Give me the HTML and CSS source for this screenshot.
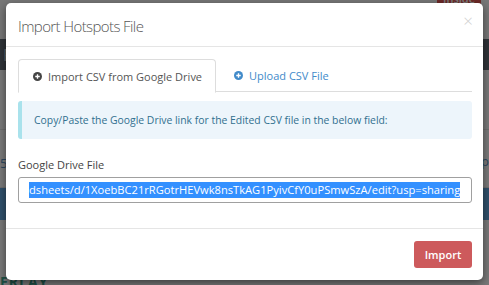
FILE: index.html
```html
<!DOCTYPE html>
<html>
<head>
<meta charset="utf-8">
<link rel="stylesheet" href="styles.css">
</head>
<body>
<div class="page">
  <div class="band top"><span class="badge">Inside</span></div>
  <div class="band navbar"><span class="nav-letter">F</span></div>
  <div class="band light"></div>
  <div class="band row"><span class="num">5</span><span class="rtext">p</span></div>
  <div class="band blue"></div>
  <div class="band light2"></div>
  <div class="band foot"><span class="overlay-title">ERLAY</span></div>
</div>
<div class="backdrop"></div>
<div class="modal">
  <div class="modal-header">
    <h4 class="modal-title">Import Hotspots File</h4>
    <span class="close">&times;</span>
  </div>
  <div class="modal-body">
    <ul class="tabs">
      <li class="tab active">
        <svg class="ico" viewBox="0 0 16 16"><circle cx="8" cy="8" r="8" fill="currentColor"/><path d="M8 4v8M4 8h8" stroke="#fff" stroke-width="2.4"/></svg>
        Import CSV from Google Drive
      </li>
      <li class="tab link">
        <svg class="ico" viewBox="0 0 16 16"><circle cx="8" cy="8" r="8" fill="currentColor"/><path d="M8 4v8M4 8h8" stroke="#fff" stroke-width="2.4"/></svg>
        Upload CSV File
      </li>
    </ul>
    <div class="alert">Copy/Paste the Google Drive link for the Edited CSV file in the below field:</div>
    <div class="form-group">
      <label class="label">Google Drive File</label>
      <div class="input"><span class="sel">dsheets/d/1XoebBC21rRGotrHEVwk8nsTkAG1PyivCfY0uPSmwSzA/edit?usp=sharing</span></div>
    </div>
  </div>
  <div class="modal-footer">
    <button class="btn">Import</button>
  </div>
</div>
</body>
</html>
```
FILE: styles.css
```css
* { box-sizing: border-box; }
html, body { margin: 0; padding: 0; }
body {
  width: 489px;
  height: 285px;
  overflow: hidden;
  font-family: "Open Sans", "DejaVu Sans", sans-serif;
  position: relative;
  background: #f0f0f0;
}
.page { display: flex; flex-direction: column; height: 285px; overflow: hidden; }
.band { position: relative; width: 100%; flex: none; overflow: hidden; }
.top { height: 39px; background: #eeeeee; }
.badge {
  position: absolute; right: 8px; top: -11px;
  background: #d9534f; color: #fff; font-size: 11px;
  padding: 2px 6px; border-radius: 4px; font-weight: 600;
}
.navbar { height: 31px; background: #5e6670; color: #cfd4da; font-size: 16px; }
.nav-letter { position: absolute; left: 3px; top: 5px; }
.light { height: 60px; background: #f2f2f2; border-bottom: 1px solid #dddddd; }
.row { height: 58px; background: #f5f5f5; border-bottom: 1px solid #dddddd; }
.num { position: absolute; left: 0; top: 24px; color: #5a8fc0; font-size: 13px; }
.rtext { position: absolute; right: 0; top: 22px; color: #5a8fc0; font-size: 13px; }
.blue { height: 32px; background: #5fa0d6; }
.light2 { height: 48px; background: #f2f2f2; }
.foot { height: 17px; background: #f2f2f2; }
.overlay-title {
  position: absolute; left: 0; top: 4px; font-size: 14px;
  font-weight: 700; color: #3aa08a; letter-spacing: 1px;
}
.backdrop {
  position: absolute; inset: 0;
  background: rgba(0, 0, 0, 0.5);
}
.modal {
  position: absolute;
  left: 6px; top: 3px;
  width: 477px; height: 277px;
  background: #fff;
  border-radius: 5px;
  box-shadow: 0 3px 9px rgba(0, 0, 0, 0.5);
  display: flex; flex-direction: column;
}
.modal-header {
  height: 44px;
  padding: 0 12px;
  border-bottom: 1px solid #e5e5e5;
  display: flex; align-items: center; justify-content: space-between;
  position: relative;
  flex: none;
}
.modal-title {
  margin: 0;
  padding-top: 2px;
  font-size: 15px;
  font-weight: 300;
  letter-spacing: -0.6px;
  color: #555;
}
.close {
  position: absolute; right: 10px; top: 6px;
  font-size: 17px; color: #d0d0d0; font-weight: 300;
}
.modal-body {
  padding: 12px 11px 0 12px;
  flex: 1;
}
.tabs {
  list-style: none;
  margin: 0;
  padding: 0;
  display: flex;
  border-bottom: 1px solid #dddddd;
  height: 33px;
}
.tab {
  display: flex; align-items: center; gap: 6px;
  padding: 0 13px 0 16px;
  font-size: 11px;
  height: 33px;
  margin-right: 2px;
}
.tab.active {
  color: #555;
  border: 1px solid #dddddd;
  border-bottom-color: #fff;
  border-radius: 4px 4px 0 0;
  background: #fff;
  height: 34px;
  padding-left: 14px;
}
.tab.link { color: #428bca; }
.tab.active .ico { color: #444; }
.ico { width: 9px; height: 9px; flex: none; }
.alert {
  margin-top: 9px;
  height: 38px;
  background: #edf5fb;
  border-left: 4px solid #a9e2ec;
  border-radius: 3px;
  color: #31708f;
  font-size: 10.4px;
  display: flex; align-items: center;
  padding-left: 12px;
}
.form-group { margin-top: 18px; }
.label {
  display: block;
  font-size: 11px;
  line-height: 15px;
  color: #444;
  margin-bottom: 5px;
}
.input {
  height: 26px;
  border: 1px solid #a0a0a0;
  border-radius: 3px;
  display: flex; align-items: center;
  padding: 0 10px;
  overflow: hidden;
  white-space: nowrap;
  font-size: 11.15px;
}
.sel { background: #3390ff; color: #fff; line-height: 16px; }
.modal-footer {
  border-top: 1px solid #e5e5e5;
  height: 52px;
  padding: 12px 11px 0 12px;
  display: flex; justify-content: flex-end; align-items: flex-start;
  flex: none;
}
.btn {
  width: 58px; height: 27px;
  background: #cd5a5c;
  color: #fff;
  border: none;
  border-radius: 3px;
  font-family: "Open Sans", "DejaVu Sans", sans-serif;
  font-size: 11px;
  font-weight: 600;
  padding: 0;
}
```
